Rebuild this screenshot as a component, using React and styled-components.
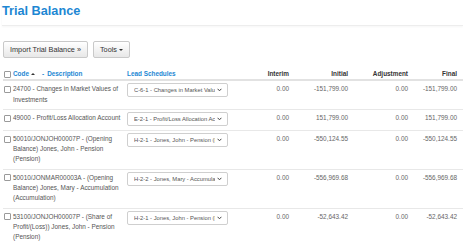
import React from 'react';
import styled, { createGlobalStyle } from 'styled-components';

const Global = createGlobalStyle`
  html, body { margin: 0; padding: 0; background: #fff; }
  body { font-family: "Liberation Sans", Arial, sans-serif; }
  * { box-sizing: border-box; }
`;

const Page = styled.div`
  width: 463px;
  padding-left: 3px;
`;

const TitleBar = styled.div`
  height: 26px;
  padding-top: 4px;
  margin-left: -1px;
  border-bottom: 1px solid #ededed;
  box-shadow: 0 1px 2px rgba(0, 0, 0, 0.04);
`;

const Title = styled.h1`
  margin: 0;
  font-size: 12.7px;
  line-height: 15px;
  font-weight: 700;
  color: #1d87d3;
`;

const Toolbar = styled.div`
  display: flex;
  gap: 5px;
  padding-top: 15px;
`;

const Button = styled.button`
  width: ${p => p.$w}px;
  height: 17px;
  padding: 0;
  display: flex;
  align-items: center;
  justify-content: center;
  gap: 2px;
  font-family: inherit;
  font-size: 7.3px;
  color: #333;
  background: linear-gradient(#ffffff, #e8e8e8);
  border: 1px solid #c9c9c9;
  border-radius: 2px;
`;

const Caret = styled.span`
  width: 0;
  height: 0;
  border-left: 2px solid transparent;
  border-right: 2px solid transparent;
  border-top: 2px solid #333;
`;

const Grid = styled.div`
  display: grid;
  grid-template-columns: 124px 101px 61px 59px 60px 49px 1fr;
  font-size: 6.4px;
  line-height: 10.3px;
`;

const HeadRow = styled(Grid)`
  margin-top: 9px;
  padding: 2px 0 0;
  border-bottom: 2px solid #e2e2e2;
  font-weight: 700;
  color: #333;
`;

const Row = styled(Grid)`
  padding: 3px 0 4px;
  border-bottom: 1px solid #e8e8e8;
  color: #555;
`;

const CodeCell = styled.div`
  display: flex;
  align-items: flex-start;
  gap: 2px;
  padding-left: 1px;
`;

const Check = styled.span`
  flex: none;
  width: 7px;
  height: 7px;
  margin-top: 1.7px;
  border: 1px solid #9a9a9a;
  border-radius: 1px;
  background: #fff;
`;

const CodeText = styled.div`
  width: 111px;
`;

const Link = styled.span`
  color: #1d87d3;
`;

const SortArrow = styled.span`
  display: inline-block;
  width: 0;
  height: 0;
  margin: 0 0 1px 2px;
  vertical-align: middle;
  border-left: 2px solid transparent;
  border-right: 2px solid transparent;
  border-bottom: 2.5px solid #333;
`;

const Dash = styled.span`
  color: #1d87d3;
  margin: 0 3px 0 7px;
`;

const Select = styled.div`
  width: 101px;
  height: 14px;
  margin-top: -1px;
  padding: 0 5px 0 6px;
  display: flex;
  align-items: center;
  justify-content: space-between;
  border: 1px solid #cfcfcf;
  border-radius: 2px;
  background: #fff;
  font-size: 5.8px;
  color: #555;
`;

const SelectText = styled.span`
  width: 81px;
  overflow: hidden;
  white-space: nowrap;
`;

const Num = styled.div`
  text-align: right;
  color: ${p => (p.$head ? '#333' : '#666')};
`;

const rows = [
  {
    code: '24700 - Changes in Market Values of Investments',
    lead: 'C-6-1 - Changes in Market Values of Investments',
    interim: '0.00', initial: '-151,799.00', adj: '0.00', final: '-151,799.00',
  },
  {
    code: '49000 - Profit/Loss Allocation Account',
    lead: 'E-2-1 - Profit/Loss Allocation Account',
    interim: '0.00', initial: '151,799.00', adj: '0.00', final: '151,799.00',
  },
  {
    code: '50010/JONJOH00007P - (Opening Balance) Jones, John - Pension (Pension)',
    lead: 'H-2-1 - Jones, John - Pension (Pension)',
    interim: '0.00', initial: '-550,124.55', adj: '0.00', final: '-550,124.55',
  },
  {
    code: '50010/JONMAR00003A - (Opening Balance) Jones, Mary - Accumulation (Accumulation)',
    lead: 'H-2-2 - Jones, Mary - Accumulation (Accumulation)',
    interim: '0.00', initial: '-556,969.68', adj: '0.00', final: '-556,969.68',
  },
  {
    code: '53100/JONJOH00007P - (Share of Profit/(Loss)) Jones, John - Pension (Pension)',
    lead: 'H-2-1 - Jones, John - Pension (Pension)',
    interim: '0.00', initial: '-52,643.42', adj: '0.00', final: '-52,643.42',
  },
];

const Chevron = () => (
  <svg width="5" height="4" viewBox="0 0 5 4" aria-hidden="true">
    <polyline points="0.6,0.8 2.5,2.8 4.4,0.8" fill="none" stroke="#444" strokeWidth="1" />
  </svg>
);

export default function App() {
  return (
    <Page>
      <Global />
      <TitleBar>
        <Title>Trial Balance</Title>
      </TitleBar>
      <Toolbar>
        <Button $w={85}>Import Trial Balance »</Button>
        <Button $w={37}>Tools <Caret /></Button>
      </Toolbar>
      <HeadRow>
        <CodeCell>
          <Check />
          <div>
            <Link>Code</Link>
            <SortArrow />
            <Dash>-</Dash>
            <Link>Description</Link>
          </div>
        </CodeCell>
        <Link>Lead Schedules</Link>
        <Num $head>Interim</Num>
        <Num $head>Initial</Num>
        <Num $head>Adjustment</Num>
        <Num $head>Final</Num>
        <div />
      </HeadRow>
      {rows.map((r, i) => (
        <Row key={i}>
          <CodeCell>
            <Check />
            <CodeText>{r.code}</CodeText>
          </CodeCell>
          <div>
            <Select>
              <SelectText>{r.lead}</SelectText>
              <Chevron />
            </Select>
          </div>
          <Num>{r.interim}</Num>
          <Num>{r.initial}</Num>
          <Num>{r.adj}</Num>
          <Num>{r.final}</Num>
          <div />
        </Row>
      ))}
    </Page>
  );
}
